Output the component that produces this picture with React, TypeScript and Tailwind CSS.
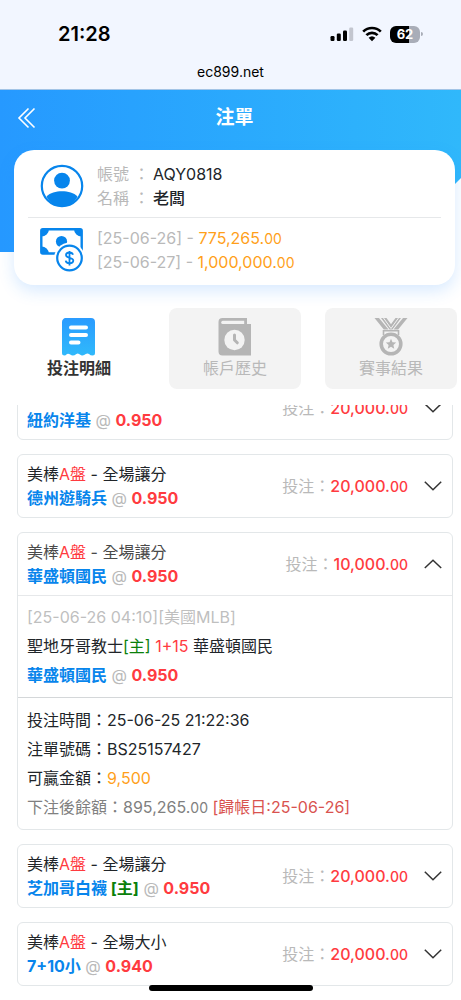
import { useState } from "react";

type Bet = {
  id: string;
  market: string;
  pick: string;
  home?: boolean;
  odds: string;
  stake: string;
  detail?: {
    league: string;
    homeTeam: string;
    line: string;
    awayTeam: string;
    time: string;
    ticket: string;
    win: string;
    balance: string;
    settle: string;
  };
};

const bets: Bet[] = [
  { id: "b1", market: "全場讓分", pick: "紐約洋基", odds: "0.950", stake: "20,000" },
  { id: "b2", market: "全場讓分", pick: "德州遊騎兵", odds: "0.950", stake: "20,000" },
  {
    id: "b3",
    market: "全場讓分",
    pick: "華盛頓國民",
    odds: "0.950",
    stake: "10,000",
    detail: {
      league: "[25-06-26 04:10][美國MLB]",
      homeTeam: "聖地牙哥教士",
      line: "1+15",
      awayTeam: "華盛頓國民",
      time: "25-06-25 21:22:36",
      ticket: "BS25157427",
      win: "9,500",
      balance: "895,265",
      settle: "[歸帳日:25-06-26]",
    },
  },
  { id: "b4", market: "全場讓分", pick: "芝加哥白襪", home: true, odds: "0.950", stake: "20,000" },
  { id: "b5", market: "全場大小", pick: "7+10小", odds: "0.940", stake: "20,000" },
];

function StatusIcons() {
  return (
    <div className="flex items-center gap-2">
      <svg width="24" height="16" viewBox="0 0 24 16" aria-hidden="true">
        <rect x="0.5" y="10" width="4" height="5" rx="1.2" fill="#000" />
        <rect x="6.8" y="7.5" width="4" height="7.5" rx="1.2" fill="#000" />
        <rect x="13" y="4.5" width="4" height="10.5" rx="1.2" fill="#000" />
        <rect x="19.2" y="1.5" width="4" height="13.5" rx="1.2" fill="#c3c6cf" />
      </svg>
      <svg width="20" height="16" viewBox="0 0 20 16" aria-hidden="true">
        <g fill="none" stroke="#000" strokeWidth="2.7">
          <path d="M1.2 5.6a12.6 12.6 0 0 1 17.6 0" />
          <path d="M4.4 9.1a8 8 0 0 1 11.2 0" />
        </g>
        <path d="M6.6 11.8a5 5 0 0 1 6.8 0L10 15.2z" fill="#000" />
      </svg>
      <div className="flex items-center gap-px">
        <div className="flex h-[17px] w-[30px] items-center justify-center rounded-md bg-linear-to-r from-black from-62% to-[#a9adb8] to-62% text-[13px] leading-4 font-bold text-white">
          62
        </div>
        <div className="h-1 w-0.5 rounded-r-full bg-[#a9adb8]" />
      </div>
    </div>
  );
}

function UserIcon() {
  return (
    <svg width="44" height="44" viewBox="0 0 44 44" aria-hidden="true">
      <circle cx="22" cy="22" r="20.2" fill="#fff" stroke="#0785ec" strokeWidth="2.2" />
      <circle cx="22" cy="16.6" r="7.9" fill="#0785ec" />
      <path d="M6.5 32.5C10 28.8 16 27.3 22 27.3s12 1.5 15.5 5.2C34.5 38.5 29 42.5 22 42.5S9.5 38.5 6.5 32.5z" fill="#0785ec" />
    </svg>
  );
}

function MoneyIcon() {
  return (
    <svg width="44" height="44" viewBox="0 0 44 44" aria-hidden="true">
      <rect x="1.3" y="1.3" width="40.4" height="24.2" rx="1.5" fill="#fff" stroke="#0785ec" strokeWidth="2.4" />
      <path d="M1 1h8a7.5 7.5 0 0 1-8 7.5zM42 1h-8a7.5 7.5 0 0 0 8 7.5zM1 26h8a7.5 7.5 0 0 0-8-7.5z" fill="#0785ec" />
      <circle cx="21.5" cy="13.5" r="5.6" fill="#0785ec" />
      <circle cx="29.5" cy="30" r="15.3" fill="#fff" />
      <circle cx="29.5" cy="30" r="12.3" fill="#fff" stroke="#0785ec" strokeWidth="2.2" />
      <path d="M33 26.8c-.4-1.5-1.700-2.300-3.500-2.300-2.100 0-3.500 1-3.500 2.600 0 3.700 7.300 1.800 7.300 5.500 0 1.700-1.600 2.700-3.800 2.700-2 0-3.600-.9-3.800-2.600M29.5 23v14.500" fill="none" stroke="#0785ec" strokeWidth="1.8" />
    </svg>
  );
}

function BillIcon() {
  return (
    <svg width="34" height="38" viewBox="0 0 34 38" aria-hidden="true">
      <defs>
        <linearGradient id="bill" x1="0" y1="0" x2="0" y2="1">
          <stop offset="0" stopColor="#2a9bff" />
          <stop offset="1" stopColor="#30b9fb" />
        </linearGradient>
      </defs>
      <path d="M4.5 0h24.500a4 4 0 0 1 4 4v31a2.500 2.500 0 0 1-2.500 2.500q-2 0-3.500-1.500-1.500-1.200-3.200 0-2.300 2-4.600 1.200l-2.200-1.200q-1.200-.8-2.600 0-3.600 2.800-6.200.4-2-1.200-3.200-.4-1.500 1.500-2.500 1.500A2.500 2.500 0 0 1 0 35V4a4 4 0 0 1 4.500-4z" fill="url(#bill)" />
      <path d="M9 9.500h15M9 17h15M9 24.500h7.500" stroke="#fff" strokeWidth="4" strokeLinecap="round" />
    </svg>
  );
}

function HistoryIcon() {
  return (
    <svg width="34" height="38" viewBox="0 0 34 38" aria-hidden="true">
      <path d="M4.500 0H29V6.100H33V37.500H4.500A4 4 0 0 1 .5 33.500V4a4 4 0 0 1 4-4z" fill="#b5b5b5" />
      <path d="M26.200 2.800H4.800a1.600 1.600 0 0 0 0 3.200H26.200z" fill="#f3f3f3" />
      <circle cx="16.500" cy="22" r="10.200" fill="#f3f3f3" />
      <path d="M16.500 17v5l2.800 2.800" fill="none" stroke="#b5b5b5" strokeWidth="3" strokeLinecap="round" strokeLinejoin="round" />
    </svg>
  );
}

function MedalIcon() {
  return (
    <svg width="34" height="38" viewBox="0 0 34 38" aria-hidden="true">
      <path d="M.5 0H5l9.500 11.500H9.800z" fill="#b5b5b5" />
      <path d="M7 0h5.500l4.500 6.200L21.500 0H27l-8.500 11.500h-3z" fill="#b5b5b5" />
      <path d="M9.500 0L17 10.500M24.500 0L17 10.500" stroke="#f3f3f3" strokeWidth="1" />
      <path d="M29 0h4.500l-9.300 11.500h-4.700z" fill="#b5b5b5" />
      <path d="M9.500 17v-4.200h15V17" fill="none" stroke="#b5b5b5" strokeWidth="1.600" />
      <circle cx="17" cy="26" r="9.800" fill="#f3f3f3" stroke="#b5b5b5" strokeWidth="3.600" />
      <path d="M17 20.800l1.500 3.400 3.700.4-2.800 2.500.8 3.600-3.200-1.900-3.200 1.900.8-3.600-2.800-2.500 3.700-.4z" fill="#b5b5b5" />
    </svg>
  );
}

function Chevron({ up }: { up: boolean }) {
  return (
    <svg width="18" height="10" viewBox="0 0 18 10" fill="none" stroke="#333" strokeWidth="1.500" aria-hidden="true">
      <path d={up ? "M.8 9L9 1.200 17.200 9" : "M.8 .8L9 8.800 17.200 .8"} />
    </svg>
  );
}

function Pick({ bet }: { bet: Bet }) {
  return (
    <span className="block font-bold text-[#0785ec]">
      {bet.pick}
      {bet.home && <span className="text-[#0a800a]"> [主]</span>}
      <span className="font-normal text-[#b9b9b9]"> @ </span>
      <span className="text-[#ff3b3f]">{bet.odds}</span>
    </span>
  );
}

function BetCard({ bet }: { bet: Bet }) {
  const [open, setOpen] = useState(Boolean(bet.detail));
  const d = bet.detail;

  return (
    <li className="rounded-md border border-[#e3e7e9] bg-white">
      <button
        type="button"
        aria-expanded={open}
        onClick={() => setOpen(!open)}
        className="flex w-full items-center px-[9px] py-[7px] text-left"
      >
        <span className="flex-1 leading-6">
          <span className={open ? "block text-[#4a4a4a]" : "block text-[#212529]"}>
            美棒<span className="text-[#ff3b3f]">A盤</span> - {bet.market}
          </span>
          <Pick bet={bet} />
        </span>
        <span className="text-[#b9b9b9]">投注：</span>
        <span className="mr-4 font-medium text-[#ff3b3f]">
          {bet.stake}.<span className="text-sm">00</span>
        </span>
        <span className="mr-px">
          <Chevron up={open} />
        </span>
      </button>
      {open && d && (
        <div className="leading-[29px] text-[#212529]">
          <div className="border-t border-[#e6e8ea] px-[9px] py-[7px]">
            <p className="text-[#bfbfbf]">{d.league}</p>
            <p>
              {d.homeTeam}
              <span className="text-[#0a800a]">[主]</span> <span className="text-[#ff3b3f]">{d.line}</span> {d.awayTeam}
            </p>
            <Pick bet={bet} />
          </div>
          <div className="border-t border-[#d4d7d9] px-[9px] pt-2 pb-[7px]">
            <p>投注時間：{d.time}</p>
            <p>注單號碼：{d.ticket}</p>
            <p>
              可贏金額：<span className="text-[#ff9f1a]">{d.win}</span>
            </p>
            <p className="text-[#808080]">
              下注後餘額：{d.balance}.<span className="text-sm">00</span> <span className="text-[#d9534f]">{d.settle}</span>
            </p>
          </div>
        </div>
      )}
    </li>
  );
}

const tabs = [
  { label: "投注明細", icon: <BillIcon /> },
  { label: "帳戶歷史", icon: <HistoryIcon /> },
  { label: "賽事結果", icon: <MedalIcon /> },
];

export default function App() {
  const [tab, setTab] = useState(0);

  return (
    <div className="relative bg-white font-[Inter,'Noto_Sans_CJK_TC',sans-serif] text-base text-[#212529]">
      <div className="border-b border-[#a3c4e6] bg-[#f2f6ff] text-black">
        <div className="flex items-center justify-between pt-5 pr-[38px] pl-[58px]">
          <span className="text-xl leading-7 font-semibold">21:28</span>
          <StatusIcons />
        </div>
        <p className="pt-[13px] pb-[6px] text-center text-sm leading-[22px]">
          <a href="#site">ec899.net</a>
        </p>
      </div>

      <div className="relative">
        <div className="absolute inset-x-0 top-0 h-[162px] bg-linear-to-r from-[#2699ff] to-[#30b8fb] [clip-path:polygon(0_0,100%_0,100%_88px,calc(100%-74px)_100%,0_100%)]" />
        <header className="relative flex h-[60px] items-center px-4 pb-1 text-white">
          <button type="button" aria-label="返回" className="w-6">
            <svg width="20" height="22" viewBox="0 0 20 22" fill="none" stroke="#fff" strokeWidth="1.600" aria-hidden="true">
              <path d="M12.500 1.500L3 11l9.500 9.500M18.500 1.500L9 11l9.500 9.500" />
            </svg>
          </button>
          <h1 className="flex-1 pr-4 text-center text-[19px] font-bold">注單</h1>
        </header>

        <section className="relative mr-[6px] ml-[14px] rounded-[20px] bg-white px-[14px] pt-3 pb-[11px] shadow-[0_6px_16px_rgba(38,140,255,0.18)]">
          <div className="flex items-center gap-[13px] border-b border-[#e6e8ea] pb-[7px] pl-3">
            <UserIcon />
            <dl className="grid grid-cols-[56px_1fr] leading-6">
              <dt className="text-[#b9b9b9]">帳號 ：</dt>
              <dd>AQY0818</dd>
              <dt className="text-[#b9b9b9]">名稱 ：</dt>
              <dd className="font-medium">老闆</dd>
            </dl>
          </div>
          <div className="flex items-center gap-[13px] pt-2 pl-3">
            <MoneyIcon />
            <div className="leading-6 text-[#b9b9b9]">
              <p>
                [25-06-26] - <span className="text-[#ff9f1a]">775,265.<span className="text-sm">00</span></span>
              </p>
              <p>
                [25-06-27] - <span className="text-[#ff9f1a]">1,000,000.<span className="text-sm">00</span></span>
              </p>
            </div>
          </div>
        </section>

        <nav className="mt-[23px] mr-1 ml-[13px] grid grid-cols-3 gap-6">
          {tabs.map((t, i) => (
            <button
              key={t.label}
              type="button"
              onClick={() => setTab(i)}
              className={`flex h-[81px] flex-col items-center rounded-lg pt-[10px] leading-6 ${
                i === tab ? "font-bold text-[#333]" : "bg-[#f3f3f3] text-[#b9b9b9]"
              }`}
            >
              {t.icon}
              {t.label}
            </button>
          ))}
        </nav>
      </div>

      {/* the list is scrolled a little, so its first card is cut by the top edge */}
      <main className="mt-4 overflow-hidden pr-2 pb-[14px] pl-[17px]">
        <ul className="-mt-[29px] flex flex-col gap-[14px]">
          {bets.map((b) => (
            <BetCard key={b.id} bet={b} />
          ))}
        </ul>
      </main>

      <div className="absolute inset-x-0 bottom-[9px] mx-auto h-[6px] w-[164px] rounded-full bg-black" />
    </div>
  );
}
